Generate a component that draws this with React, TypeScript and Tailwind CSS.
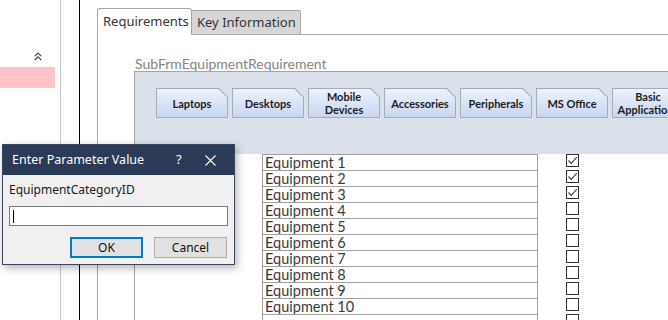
import React from "react";

const cats = [
  ["Laptops"],
  ["Desktops"],
  ["Mobile", "Devices"],
  ["Accessories"],
  ["Peripherals"],
  ["MS Office"],
  ["Basic", "Applications"],
];

function CatButton({ lines }: { lines: string[] }) {
  return (
    <div className="shrink-0 w-[72px] h-[30px] bg-[#a3acbd] p-px [clip-path:polygon(0_0,calc(100%_-_9px)_0,100%_9px,100%_100%,0_100%)]">
      <div className="w-full h-full bg-linear-to-b from-[#eef2fb] to-[#c8d6f1] [clip-path:polygon(0_0,calc(100%_-_8.6px)_0,100%_8.6px,100%_100%,0_100%)] flex flex-col items-center justify-center text-[11px] leading-[13px] font-bold text-[#1c1c1c] whitespace-nowrap">
        {lines.map((l) => (
          <span key={l}>{l}</span>
        ))}
      </div>
    </div>
  );
}

function Check({ on }: { on: boolean }) {
  return (
    <div className="w-[13px] h-[13px] border border-[#333] bg-white flex items-center justify-center">
      {on && (
        <svg width="11" height="11" viewBox="0 0 11 11">
          <polyline points="1.5,5.5 4.2,8.3 9.8,2.2" fill="none" stroke="#444" strokeWidth="1.2" />
        </svg>
      )}
    </div>
  );
}

export default function App() {
  const rows = Array.from({ length: 11 }, (_, i) => i + 1);
  return (
    <div className="relative w-[668px] h-[320px] overflow-hidden bg-white flex font-['Lato',sans-serif]">
      {/* left nav pane */}
      <div className="w-[61px] shrink-0 border-r border-[#c6c6c6] flex flex-col pt-[52px]">
        <div className="flex justify-end pr-[18px] h-[10px]">
          <svg width="8" height="9" viewBox="0 0 8 9">
            <polyline points="0.8,4.2 4,1 7.2,4.2" fill="none" stroke="#444" strokeWidth="1.1" />
            <polyline points="0.8,8 4,4.8 7.2,8" fill="none" stroke="#444" strokeWidth="1.1" />
          </svg>
        </div>
        <div className="mt-[5px] w-[55px] h-[21px] bg-[#ffc2c6]" />
      </div>
      <div className="w-[18px] shrink-0" />
      <div className="w-px shrink-0 bg-black" />
      <div className="w-[17px] shrink-0" />

      {/* main area */}
      <div className="flex-1 min-w-0 flex flex-col pt-[8px]">
        <div className="flex items-end h-[27px] shrink-0">
          <div className="w-[95px] h-[27px] border border-b-0 border-[#a7a7a7] rounded-t-[3px] bg-white flex items-center pl-[5px] text-[13px] text-[#333] font-['Noto_Sans',sans-serif]">
            Requirements
          </div>
          <div className="w-[109px] h-[25px] border border-l-0 border-[#a7a7a7] rounded-tr-[3px] bg-[#d6d6d6] flex items-center pl-[5px] text-[13px] text-[#333] font-['Noto_Sans',sans-serif]">
            Key Information
          </div>
          <div className="flex-1 border-b border-[#a7a7a7]" />
        </div>
        <div className="flex-1 flex flex-col border-l border-[#a7a7a7] pl-[36px] pt-[21px]">
          <div className="h-[15px] leading-[15px] text-[14px] text-[#858585] pl-[1px]">SubFrmEquipmentRequirement</div>
          <div className="flex-1 flex flex-col border-l border-t border-[#a5a5a5]">
            <div className="h-[82px] shrink-0 bg-[#dbe1ea] pl-[21px] pt-[16px] flex gap-[4px] overflow-hidden">
              {cats.map((c) => (
                <CatButton key={c.join(" ")} lines={c} />
              ))}
            </div>
            <div className="flex-1 flex flex-col pl-[127px]">
              <div className="border-t border-[#a0a0a0] w-[276px]" />
              {rows.map((n) => (
                <div key={n} className="flex items-start h-[16px] shrink-0">
                  <div className="w-[276px] h-[16px] overflow-hidden border-x border-b border-[#a0a0a0] text-[14.5px] leading-[15px] text-[#3a3a3a] pl-[2px] whitespace-nowrap">
                    {n <= 10 ? `Equipment ${n}` : ""}
                  </div>
                  <div className="ml-[28px] -mt-px">
                    <Check on={n <= 3} />
                  </div>
                </div>
              ))}
            </div>
          </div>
        </div>
      </div>

      {/* parameter dialog */}
      <div className="absolute left-[2px] top-[144px] w-[233px] h-[121px] bg-[#f0f0f0] border border-[#3a4660] shadow-[2px_3px_8px_rgba(0,0,0,0.3)] flex flex-col font-['Noto_Sans',sans-serif]">
        <div className="h-[30px] shrink-0 bg-[#2b3a57] flex items-center text-white text-[12.5px]">
          <span className="pl-[9px] flex-1">Enter Parameter Value</span>
          <span className="w-[10px] text-[13px]">?</span>
          <span className="w-[48px] flex justify-center">
            <svg width="11" height="11" viewBox="0 0 11 11">
              <path d="M0.5 0.5 L10.5 10.5 M10.5 0.5 L0.5 10.5" stroke="white" strokeWidth="1.1" />
            </svg>
          </span>
        </div>
        <div className="flex-1 flex flex-col px-[6px] pt-[6px]">
          <div className="text-[12px] leading-[18px] text-[#1a1a1a]">EquipmentCategoryID</div>
          <div className="mt-[7px] h-[20px] w-[219px] border border-[#7a7a7a] bg-white flex items-center pl-[3px]">
            <div className="w-px h-[13px] bg-black" />
          </div>
          <div className="flex mt-[11px] pl-[61px] gap-[11px]">
            <div className="w-[73px] h-[21px] border-2 border-[#0078d7] bg-[#e1e1e1] flex items-center justify-center text-[12px] text-[#111]">OK</div>
            <div className="w-[73px] h-[21px] border border-[#adadad] bg-[#e1e1e1] flex items-center justify-center text-[12px] text-[#111]">Cancel</div>
          </div>
        </div>
      </div>
    </div>
  );
}
